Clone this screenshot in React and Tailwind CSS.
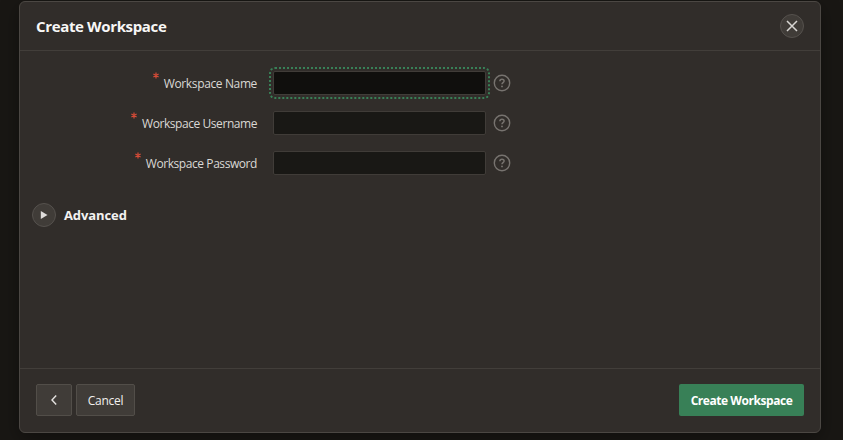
const labelFont = "font-['Open_Sans','Noto_Sans',sans-serif]";

function HelpIcon() {
  return (
    <svg width="18" height="18" viewBox="0 0 18 18" fill="none" className="ml-[7px] shrink-0">
      <circle cx="9" cy="9" r="7.7" stroke="#77736f" strokeWidth="1.4" />
      <path d="M6.9 7.2c0-1.2.9-2 2.1-2s2.1.8 2.1 1.9c0 1.5-2.1 1.6-2.1 3.2" stroke="#77736f" strokeWidth="1.5" />
      <circle cx="9" cy="12.4" r=".95" fill="#77736f" />
    </svg>
  );
}

function Field({ label, tracking, focused }) {
  return (
    <div className="flex h-10 items-center">
      <label className="flex w-[237px] items-center justify-end">
        <svg width="6" height="7" viewBox="0 0 6 7" className="mr-[5px] -mt-[15px]" stroke="#d64b37" strokeWidth="1.2">
          <path d="M3 .5v6M.4 2l5.2 3M5.6 2L.4 5" />
        </svg>
        <span className={`whitespace-nowrap pt-px text-[12px] leading-4 text-[#dad8d5] ${tracking}`}>{label}</span>
      </label>
      <input
        type="text"
        className={
          focused
            ? "ml-4 h-6 w-[213px] rounded-[2px] border border-[#403c38] bg-[#100f0d] outline-2 outline-offset-2 outline-dotted outline-[#388057]"
            : "ml-4 h-6 w-[213px] rounded-[2px] border border-[#403c38] bg-[#191815]"
        }
      />
      <HelpIcon />
    </div>
  );
}

export default function App() {
  return (
    <div className={`h-[440px] w-[843px] overflow-hidden bg-[#191714] pl-[19px] pt-px ${labelFont}`}>
      <section className="flex h-[432px] w-[802px] flex-col rounded-[6px] border border-[#4b4743] bg-[#312d2a] shadow-[0_6px_20px_rgba(0,0,0,0.35)]">
        <header className="flex h-[49px] shrink-0 items-center justify-between border-b border-[#423e3a] px-4">
          <h1 className="whitespace-nowrap pb-px text-[15px] font-bold leading-6 tracking-[-0.35px] text-[#f8f7f6]">Create Workspace</h1>
          <button className="flex size-6 items-center justify-center rounded-full border border-[#55514d] bg-[#403c38]">
            <svg width="12" height="12" viewBox="0 0 12 12" stroke="#d8d6d3" strokeWidth="1.5">
              <path d="M1 1l10 10M11 1L1 11" />
            </svg>
          </button>
        </header>
        <main className="flex-1 pt-3">
          <Field label="Workspace Name" tracking="tracking-[-0.37px]" focused />
          <Field label="Workspace Username" tracking="tracking-[-0.44px]" />
          <Field label="Workspace Password" tracking="tracking-[-0.43px]" />
          <div className="ml-3 mt-5 flex items-center gap-2">
            <button className="flex size-6 items-center justify-center rounded-full border border-[#55514d] bg-[#403c38]">
              <svg width="8" height="8" viewBox="0 0 8 8" fill="#dedcda"><path d="M.8 0v8L7.5 4z" /></svg>
            </button>
            <h2 className="text-[13px] font-bold leading-6 tracking-[-0.1px] text-[#f3f2f1]">Advanced</h2>
          </div>
        </main>
        <footer className="flex h-[64px] shrink-0 items-center border-t border-[#423e3a] px-4 pb-px">
          <button className="flex h-8 w-9 items-center justify-center rounded-[2px] border border-[#524e49] bg-[#403c38]">
            <svg width="6" height="10" viewBox="0 0 6 10" fill="none" stroke="#e5e3e1" strokeWidth="1.4"><path d="M5.2 .6L1 5l4.2 4.400" /></svg>
          </button>
          <button className="ml-1 h-8 w-[59px] rounded-[2px] border border-[#524e49] bg-[#403c38] pt-[2px] text-[12px] leading-4 tracking-[-0.25px] text-[#f1efed]">Cancel</button>
          <button className="ml-auto h-8 w-[125px] whitespace-nowrap rounded-[2px] bg-[#388057] pt-[2px] text-[12px] font-bold leading-4 tracking-[-0.45px] text-white">Create Workspace</button>
        </footer>
      </section>
    </div>
  );
}
